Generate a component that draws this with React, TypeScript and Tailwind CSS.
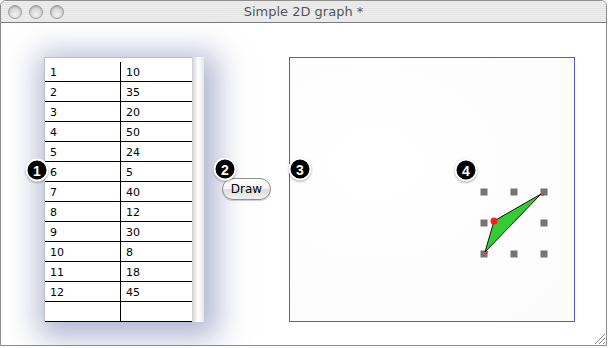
import React from "react";

const ROWS: [string, string][] = [
  ["1", "10"],
  ["2", "35"],
  ["3", "20"],
  ["4", "50"],
  ["5", "24"],
  ["6", "5"],
  ["7", "40"],
  ["8", "12"],
  ["9", "30"],
  ["10", "8"],
  ["11", "18"],
  ["12", "45"],
  ["", ""],
];

const DOTS: [number, number][] = [
  [484, 192],
  [514, 192],
  [544, 192],
  [484, 223],
  [544, 223],
  [484, 254],
  [514, 254],
  [544, 254],
];

function Badge({ n, x, y }: { n: string; x: number; y: number }) {
  return (
    <span
      className="absolute flex h-[23px] w-[23px] -translate-x-1/2 -translate-y-1/2 items-center justify-center rounded-full border-2 border-white bg-black text-[14px] font-bold leading-none text-white shadow-[0_1px_2px_rgba(0,0,0,0.35)]"
      style={{ left: x, top: y, fontFamily: '"Liberation Sans", sans-serif' }}
    >
      {n}
    </span>
  );
}

function Light() {
  return (
    <span className="h-[14px] w-[14px] rounded-full border border-[#9a9a9a] bg-[radial-gradient(circle_at_50%_70%,#f4f4f4_0%,#d6d6d6_55%,#b9b9b9_100%)] shadow-[inset_0_1px_1px_rgba(0,0,0,0.15)]" />
  );
}

export default function App() {
  return (
    <div className="relative h-[348px] w-[609px] overflow-hidden bg-white" style={{ fontFamily: '"DejaVu Sans", "Liberation Sans", sans-serif' }}>
      <div className="flex h-[346px] w-[607px] flex-col overflow-hidden rounded-t-[6px] border border-[#8c8c8c] bg-white">
        {/* title bar */}
        <div className="relative flex h-[22px] shrink-0 items-center border-b border-[#7a7a7a] bg-[repeating-linear-gradient(180deg,#eeeeee_0px,#eeeeee_1px,#e5e5e5_1px,#e5e5e5_2px)] px-[7px]">
          <div className="flex items-center gap-[7px]">
            <Light />
            <Light />
            <Light />
          </div>
          <span className="absolute inset-x-0 text-center text-[13px] leading-[22px] text-[#555555]">Simple 2D graph *</span>
        </div>

        {/* content */}
        <div className="relative flex flex-1 items-start pl-[43px] pt-[34px]">
          <div className="flex h-[265px] w-[160px] shadow-[4px_6px_28px_10px_rgba(118,126,175,0.55)]">
            <div className="flex w-[148px] flex-col border-l border-t border-[#bdbdbd] bg-white text-[11px] text-black">
              {ROWS.map(([a, b], i) => (
                <div key={i} className={`flex border-b border-black ${i === 0 ? "h-[24px] pt-[4px]" : "h-[20px]"}`}>
                  <span className="w-[76px] border-r border-black pl-[5px] pt-[4px] leading-[14px]">{a}</span>
                  <span className="flex-1 pl-[5px] pt-[4px] leading-[14px]">{b}</span>
                </div>
              ))}
            </div>
            <div className="w-[12px] bg-[linear-gradient(90deg,#cfcfcf_0%,#f2f2f2_35%,#ffffff_55%,#e6e6e6_100%)]" />
          </div>

          <button className="ml-[18px] mt-[121px] h-[22px] w-[49px] rounded-full border border-[#8e8e8e] bg-[linear-gradient(180deg,#ffffff_0%,#f3f3f3_50%,#dedede_51%,#f0f0f0_100%)] text-[12px] leading-none text-black shadow-[0_1px_1px_rgba(0,0,0,0.2)]">
            Draw
          </button>

          <div className="ml-[18px] h-[265px] w-[286px] border border-[#4f5fdc] bg-[radial-gradient(ellipse_at_30%_40%,#ffffff_0%,#fdfdfd_60%,#fbfbfb_100%)]" />

          {/* resize grip */}
          <svg className="absolute bottom-0 right-0" width="14" height="14" viewBox="0 0 14 14">
            <path d="M13 3 L3 13 M13 7 L7 13 M13 11 L11 13" stroke="#8a8a8a" strokeWidth="1" />
          </svg>
        </div>
      </div>

      {/* graph overlay */}
      <svg className="absolute left-0 top-0" width="609" height="348" viewBox="0 0 609 348">
        {DOTS.map(([x, y], i) => (
          <rect key={i} x={x - 3.5} y={y - 3.5} width="7" height="7" fill="#777373" />
        ))}
        <polygon points="541,194 494,221 485,252" fill="#33cc33" stroke="#111" strokeWidth="1" strokeLinejoin="round" />
        <circle cx="494" cy="221" r="3.5" fill="#ff1a1a" />
        <rect x="541" y="194" width="3" height="1.5" fill="#ff1a1a" />
        <rect x="486" y="251" width="1.5" height="3" fill="#ff1a1a" />
      </svg>

      <Badge n="1" x={37} y={170} />
      <Badge n="2" x={225} y={169} />
      <Badge n="3" x={300} y={169} />
      <Badge n="4" x={466} y={170} />
    </div>
  );
}
